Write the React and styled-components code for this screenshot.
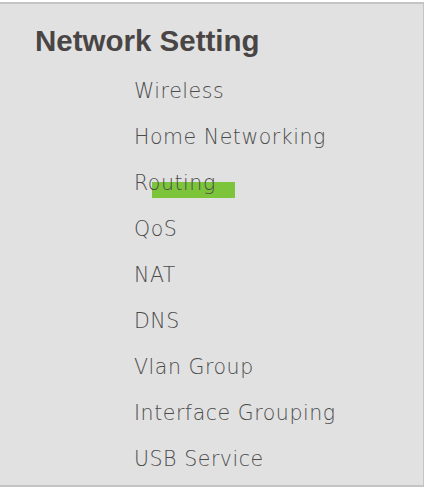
import React from "react";
import styled, { createGlobalStyle } from "styled-components";

const Global = createGlobalStyle`
  html, body {
    margin: 0;
    padding: 0;
    background: #ffffff;
  }
`;

const Panel = styled.div`
  margin-top: 2px;
  width: 424px;
  height: 485px;
  box-sizing: border-box;
  background: #e1e1e1;
  border-top: 2px solid #c4c4c4;
  border-right: 1px solid #c4c4c4;
  border-bottom: 2px solid #c4c4c4;
  padding: 18px 0 0 35px;
  font-family: "DejaVu Sans", "Liberation Sans", sans-serif;
`;

const Title = styled.h2`
  margin: 0;
  font-family: "Liberation Sans", Arial, sans-serif;
  font-size: 29.5px;
  line-height: 38px;
  font-weight: bold;
  color: #4a4545;
`;

const Menu = styled.ul`
  list-style: none;
  margin: 8px 0 0;
  padding: 0 0 0 99px;
  display: flex;
  flex-direction: column;
`;

const Item = styled.li`
  position: relative;
  height: 46px;
  line-height: 46px;
  font-size: 20.5px;
  font-weight: 200;
  letter-spacing: 0.55px;
  color: #4c4c4c;
  span {
    position: relative;
    z-index: 1;
  }
`;

const Mark = styled.div`
  position: absolute;
  left: 18px;
  top: 22px;
  width: 83px;
  height: 16px;
  background: #7cc43a;
`;

const items = [
  "Wireless",
  "Home Networking",
  "Routing",
  "QoS",
  "NAT",
  "DNS",
  "Vlan Group",
  "Interface Grouping",
  "USB Service",
];

const App = () => {
  return (
    <>
      <Global />
      <Panel>
        <Title>Network Setting</Title>
        <Menu>
          {items.map((name) => (
            <Item key={name}>
              {name === "Routing" && <Mark />}
              <span>{name}</span>
            </Item>
          ))}
        </Menu>
      </Panel>
    </>
  );
};

export default App;
